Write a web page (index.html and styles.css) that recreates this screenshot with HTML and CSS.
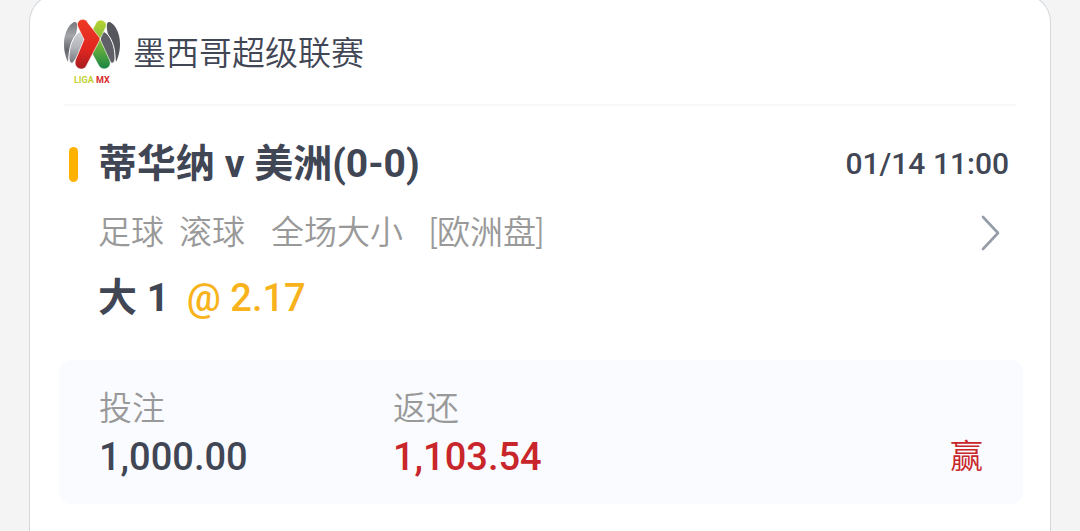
FILE: index.html
```html
<!doctype html>
<html lang="zh-CN">
<head>
<meta charset="utf-8">
<meta name="viewport" content="width=device-width, initial-scale=1">
<title>注单详情</title>
<link rel="stylesheet" href="styles.css">
</head>
<body>
	<main class="ticket">
		<header class="league">
			<svg class="league-logo" viewBox="0 0 56 66" role="img" aria-label="LIGA MX">
				<defs>
					<linearGradient id="silver" x1="0" y1="0" x2="0" y2="1">
						<stop offset="0" stop-color="#77787c"/>
						<stop offset="0.35" stop-color="#a5a6aa"/>
						<stop offset="0.7" stop-color="#66676c"/>
						<stop offset="1" stop-color="#8b8c90"/>
					</linearGradient>
					<linearGradient id="steel" x1="0" y1="0" x2="0" y2="1">
						<stop offset="0" stop-color="#d0d1d5"/>
						<stop offset="0.5" stop-color="#b3b4b9"/>
						<stop offset="1" stop-color="#77787d"/>
					</linearGradient>
					<linearGradient id="red" x1="0" y1="0" x2="0" y2="1">
						<stop offset="0" stop-color="#ee3a26"/>
						<stop offset="0.6" stop-color="#e0261f"/>
						<stop offset="1" stop-color="#a81c20"/>
					</linearGradient>
					<linearGradient id="green" x1="0" y1="0" x2="0" y2="1">
						<stop offset="0" stop-color="#b8d531"/>
						<stop offset="0.45" stop-color="#7cb93c"/>
						<stop offset="1" stop-color="#188542"/>
					</linearGradient>
				</defs>
				<path fill="url(#silver)" d="M10 3C4 6 0 15 0 25c0 8 2 14 4 18 1-9 3-17 8-28 1-4 3-13-2-12z"/>
				<path fill="#56575d" d="M46 3c6 3 10 12 10 22 0 8-2 14-4 18-1-9-3-17-8-28C43 11 41 2 46 3z"/>
				<path fill="url(#steel)" stroke="#fff" stroke-width="1" d="M15 13C9 17 5 28 5 38c0 4 1 7 4 6l4-6 7-17c-1-6-2-9-5-8z"/>
				<path fill="#606168" stroke="#fff" stroke-width="1" d="M41 13c6 4 10 15 10 25 0 4-1 7-4 6l-4-6-7-17c1-6 2-9 5-8z"/>
				<path fill="url(#green)" stroke="#fff" stroke-width="0.6" d="M28 12 32 4C35-2 44 2 42 8L36 20l10 22c2 7-7 11-11 5L24 27z"/>
				<path fill="url(#red)" stroke="#fff" stroke-width="0.6" d="M24 4C21-3 11 1 14 8l6 12.500L11.500 41C9 49 18 53 22 47.500L35.500 21.500c.5-1 .5-2 0-3z"/>
				<text class="logo-liga" x="10" y="64">LIGA</text>
				<text class="logo-mx" x="32" y="64">MX</text>
			</svg>
			<h1 class="league-name">墨西哥超级联赛</h1>
		</header>

		<section class="match">
			<span class="match-mark"></span>
			<div class="match-body">
				<div class="match-row">
					<h2 class="match-title">蒂华纳 v 美洲(0-0)</h2>
					<time class="match-time" datetime="01-14T11:00">01/14 11:00</time>
				</div>
				<div class="match-row">
					<p class="market">
						<span class="sport"><span>足球</span><span>滚球</span></span>
						<span>全场大小</span>
						<span>[欧洲盘]</span>
					</p>
					<a class="more" href="#" aria-label="查看详情">
						<svg class="more-icon" viewBox="0 0 20 36" fill="none" stroke="#969da8" stroke-width="2.6" stroke-linecap="round" stroke-linejoin="round"><path d="M2 2l15 16L2 34"/></svg>
					</a>
				</div>
				<p class="pick">大 1 <span class="odds">@ 2.17</span></p>
			</div>
		</section>

		<section class="summary">
			<dl class="amount">
				<dt>投注</dt>
				<dd>1,000.00</dd>
			</dl>
			<dl class="amount amount-win">
				<dt>返还</dt>
				<dd>1,103.54</dd>
			</dl>
			<span class="result">赢</span>
		</section>
	</main>
</body>
</html>
```
FILE: styles.css
```css
*{
	box-sizing: border-box;
	margin: 0;
	padding: 0;
}
body{
	background-color: #f4f4f4;
	color: #414655;
	font-family: "Roboto", "Noto Sans CJK SC", sans-serif;
	font-size: 33px;
	line-height: 48px;
}
.ticket{
	background-color: #fff;
	border: 1px solid #d3d8dc;
	border-bottom: none;
	border-radius: 28px 28px 0 0;
	margin: -6px 29px 0;
	padding: 0 27px 28px 29px;
}
.league{
	display: flex;
	align-items: center;
	gap: 13px;
	height: 111px;
	margin: 0 7px 0 5px;
	padding-top: 5px;
	border-bottom: 2px solid #f8f8f8;
}
.league-logo{
	width: 56px;
	height: 66px;
	overflow: visible;
}
.logo-liga,
.logo-mx{
	font-size: 9px;
	font-weight: 700;
	fill: #bfd12f;
}
.logo-mx{
	fill: #d92a2a;
}
.league-name{
	padding-top: 4px;
	font-size: 33px;
	font-weight: 350;
}
.match{
	display: flex;
	align-items: flex-start;
	gap: 20px;
	padding: 30px 14px 0 10px;
}
.match-mark{
	width: 9px;
	height: 35px;
	margin-top: 11px;
	border-radius: 5px;
	background-color: #ffb100;
}
.match-body{
	flex: 1;
}
.match-row{
	display: flex;
	align-items: center;
	justify-content: space-between;
	height: 56px;
	margin-bottom: 13px;
}
.match-title{
	font-size: 39px;
	font-weight: 700;
}
.match-time{
	font-size: 30px;
	font-weight: 500;
}
.market{
	display: flex;
	gap: 26px;
	color: #999;
	font-weight: 350;
}
.sport{
	display: flex;
	gap: 15px;
}
.more{
	display: flex;
	padding: 0 8px;
}
.more-icon{
	width: 20px;
	height: 36px;
}
.pick{
	font-size: 39px;
	font-weight: 700;
}
.odds{
	margin-left: 8px;
	color: #f8b31c;
	font-size: 38px;
	font-weight: 500;
}
.summary{
	display: flex;
	align-items: flex-end;
	height: 144px;
	margin-top: 38px;
	padding: 20px 40px 23px;
	border-radius: 12px;
	background-color: #fafbff;
}
.amount{
	flex: 0 1 294px;
}
.amount dt{
	color: #999;
	font-weight: 350;
}
.amount dd{
	font-size: 38px;
	font-weight: 500;
}
.amount-win dd{
	color: #c9262b;
}
.result{
	margin-left: auto;
	color: #c9262b;
	font-weight: 350;
}
```
